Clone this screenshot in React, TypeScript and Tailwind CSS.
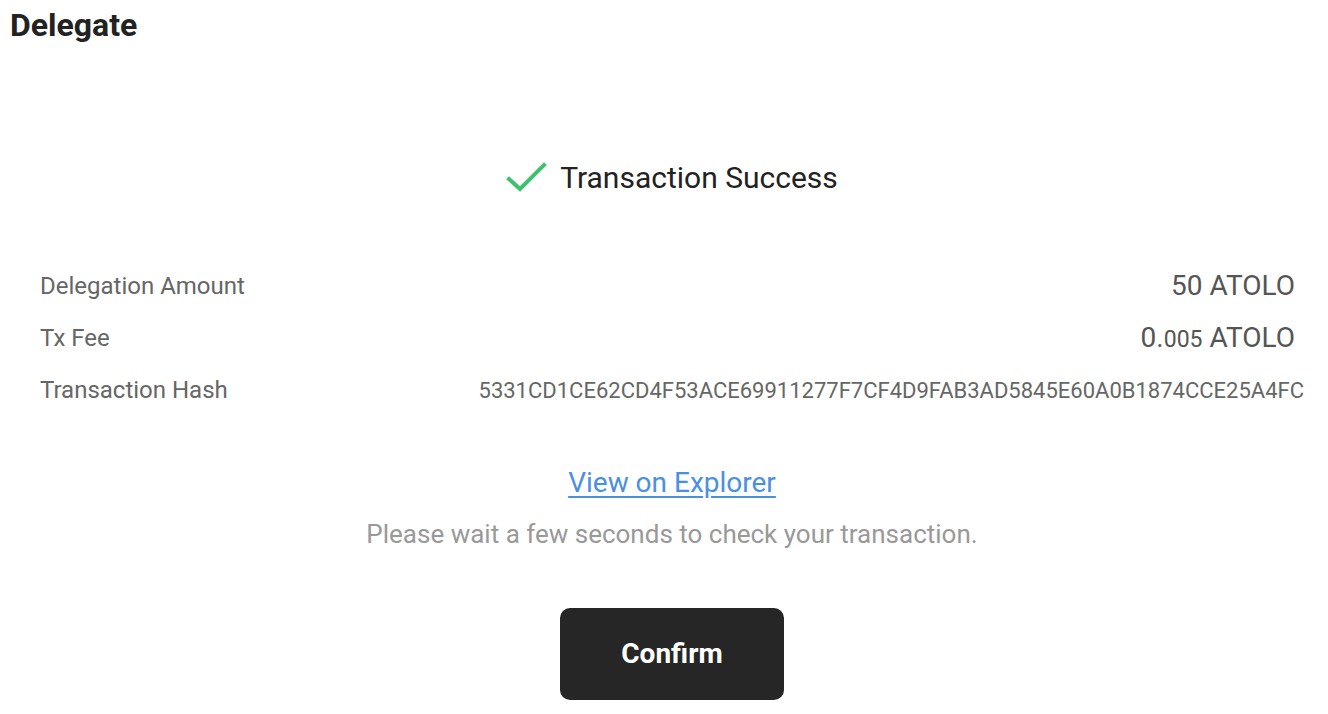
export default function App() {
  const rows = [
    { label: 'Delegation Amount', value: <span>50 ATOLO</span> },
    {
      label: 'Tx Fee',
      value: (
        <span>
          0.<span className="text-[23px]">005</span> ATOLO
        </span>
      ),
    },
  ]

  return (
    <div className="min-h-screen bg-white font-['Roboto',sans-serif]">
      <h1 className="px-[10px] pt-[6px] text-[32px] font-bold leading-[38px] text-[#222]">Delegate</h1>

      {/* status */}
      <div className="mt-[116px] flex items-center justify-center gap-[12px] pl-[16px]">
        <svg width="42" height="32" viewBox="0 0 42 32" fill="none">
          <path d="M3 17 L14 27 L38 3" stroke="#3cc26d" strokeWidth="4" strokeLinecap="square" />
        </svg>
        <span className="text-[30px] leading-[36px] text-[#222]">Transaction Success</span>
      </div>

      {/* details */}
      <div className="mt-[72px] flex flex-col gap-[16px] pl-[40px] pr-[33px]">
        {rows.map((r) => (
          <div key={r.label} className="flex h-[36px] items-center justify-between">
            <span className="text-[24px] text-[#666]">{r.label}</span>
            <span className="text-[28px] text-[#555]">{r.value}</span>
          </div>
        ))}
        <div className="flex h-[36px] items-center justify-between">
          <span className="text-[24px] text-[#666]">Transaction Hash</span>
          <span className="mr-[-9px] text-[22px] text-[#666]">
            5331CD1CE62CD4F53ACE69911277F7CF4D9FAB3AD5845E60A0B1874CCE25A4FC
          </span>
        </div>
      </div>

      {/* explorer */}
      <div className="mt-[58px] flex flex-col items-center gap-[17px] pl-[16px]">
        <a href="#" className="text-[28px] leading-[34px] text-[#4a90e2] underline underline-offset-[4px]">
          View on Explorer
        </a>
        <p className="text-[26px] leading-[34px] text-[#999]">Please wait a few seconds to check your transaction.</p>
      </div>

      <div className="mt-[57px] flex justify-center pl-[16px]">
        <button className="h-[92px] w-[224px] rounded-[10px] bg-[#262626] text-[28px] font-bold text-white">
          Confirm
        </button>
      </div>
    </div>
  )
}
